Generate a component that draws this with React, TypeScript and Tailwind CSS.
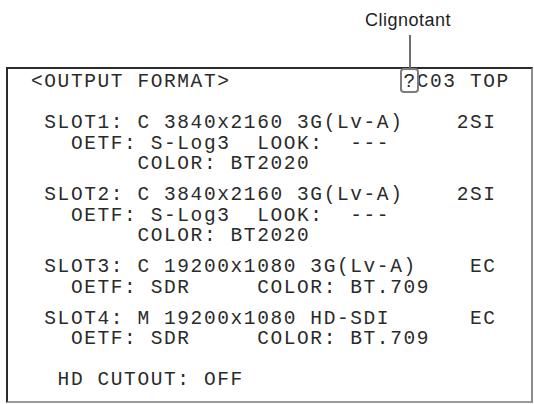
import React from "react";

const mono = { fontFamily: '"Liberation Mono", "DejaVu Sans Mono", monospace' };

function Line({ text }: { text: string }) {
  return <div className="h-[20.5px] leading-[20.5px] whitespace-pre">{text}</div>;
}

export default function App() {
  return (
    <div className="w-[534px] h-[404px] bg-white overflow-hidden text-[#2a2a2a]">
      <div className="h-[67px] pl-[365px] pt-[10px]">
        <div
          className="text-[18px] leading-[20px] tracking-[0.5px] text-[#1e1e1e]"
          style={{ fontFamily: '"Liberation Sans", Arial, sans-serif' }}
        >
          Clignotant
        </div>
      </div>
      <div
        className="ml-[6px] w-[527px] h-[336px] border-t-2 border-l-2 border-r-2 border-b-2 border-t-[#2b2b2b] border-l-[#2b2b2b] border-r-[#8c8c8c] border-b-[#9a9a9a] pt-[3px] pl-[23px] text-[19.5px] tracking-[1.6px]"
        style={mono}
      >
        <div className="h-[20.5px] leading-[20.5px] whitespace-pre">
          {"<OUTPUT FORMAT>             "}
          <span className="relative">
            ?
            <span className="absolute left-[-3px] top-[-3px] w-[19px] h-[25px] rounded-[4px] border-2 border-[#7d7d7d]">
              <span className="absolute left-[7px] bottom-full w-[2px] h-[35px] bg-[#6e6e6e]"></span>
            </span>
          </span>
          {"C03 TOP"}
        </div>
        <div className="mt-[20.5px] flex flex-col gap-[10.5px]">
          <div>
            <Line text=" SLOT1: C 3840x2160 3G(Lv-A)    2SI" />
            <Line text="   OETF: S-Log3  LOOK:  ---" />
            <Line text="        COLOR: BT2020" />
          </div>
          <div>
            <Line text=" SLOT2: C 3840x2160 3G(Lv-A)    2SI" />
            <Line text="   OETF: S-Log3  LOOK:  ---" />
            <Line text="        COLOR: BT2020" />
          </div>
          <div>
            <Line text=" SLOT3: C 19200x1080 3G(Lv-A)    EC" />
            <Line text="   OETF: SDR     COLOR: BT.709" />
          </div>
          <div>
            <Line text=" SLOT4: M 19200x1080 HD-SDI      EC" />
            <Line text="   OETF: SDR     COLOR: BT.709" />
          </div>
        </div>
        <div className="mt-[20.5px]">
          <Line text="  HD CUTOUT: OFF" />
        </div>
      </div>
    </div>
  );
}
